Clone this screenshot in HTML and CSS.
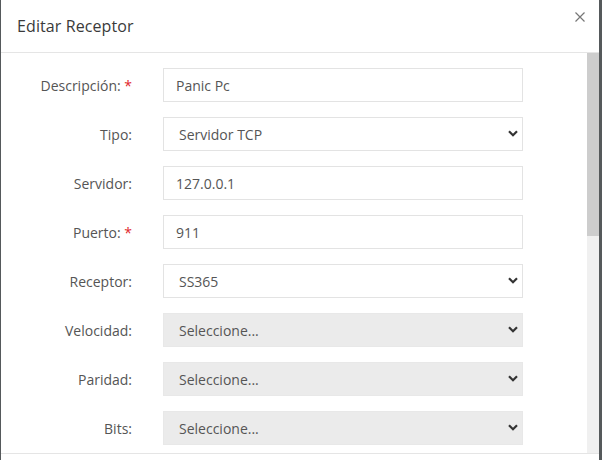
FILE: index.html
```html
<!DOCTYPE html>
<html lang="es">
<head>
<meta charset="utf-8">
<title>Editar Receptor</title>
<link rel="stylesheet" href="styles.css">
</head>
<body>
<div class="modal">
  <div class="modal-header">
    <h4 class="modal-title">Editar Receptor</h4>
    <button class="close" type="button" aria-label="Cerrar">
      <svg width="10" height="10" viewBox="0 0 10 10"><path d="M0.5 0.5 L9.5 9.5 M9.5 0.5 L0.5 9.5" stroke="#777" stroke-width="1.2" fill="none"/></svg>
    </button>
  </div>
  <div class="modal-body">
    <form class="form">
      <label class="label">Descripción: <span class="req">*</span></label>
      <input class="control" type="text" value="Panic Pc">

      <label class="label">Tipo:</label>
      <div class="select-wrap">
        <select class="control select"><option>Servidor TCP</option></select>
        <svg class="chev" width="10" height="7" viewBox="0 0 10 7"><path d="M1 1.2 L5 5.2 L9 1.2" stroke="#333" stroke-width="2.2" fill="none"/></svg>
      </div>

      <label class="label">Servidor:</label>
      <input class="control" type="text" value="127.0.0.1">

      <label class="label">Puerto: <span class="req">*</span></label>
      <input class="control" type="text" value="911">

      <label class="label">Receptor:</label>
      <div class="select-wrap">
        <select class="control select"><option>SS365</option></select>
        <svg class="chev" width="10" height="7" viewBox="0 0 10 7"><path d="M1 1.2 L5 5.2 L9 1.2" stroke="#333" stroke-width="2.2" fill="none"/></svg>
      </div>

      <label class="label">Velocidad:</label>
      <div class="select-wrap">
        <select class="control select disabled" disabled><option>Seleccione...</option></select>
        <svg class="chev" width="10" height="7" viewBox="0 0 10 7"><path d="M1 1.2 L5 5.2 L9 1.2" stroke="#333" stroke-width="2.2" fill="none"/></svg>
      </div>

      <label class="label">Paridad:</label>
      <div class="select-wrap">
        <select class="control select disabled" disabled><option>Seleccione...</option></select>
        <svg class="chev" width="10" height="7" viewBox="0 0 10 7"><path d="M1 1.2 L5 5.2 L9 1.2" stroke="#333" stroke-width="2.2" fill="none"/></svg>
      </div>

      <label class="label">Bits:</label>
      <div class="select-wrap">
        <select class="control select disabled" disabled><option>Seleccione...</option></select>
        <svg class="chev" width="10" height="7" viewBox="0 0 10 7"><path d="M1 1.2 L5 5.2 L9 1.2" stroke="#333" stroke-width="2.2" fill="none"/></svg>
      </div>
    </form>
    <div class="scrollbar"><div class="thumb"></div></div>
  </div>
  <div class="modal-footer"></div>
</div>
</body>
</html>
```
FILE: styles.css
```css
html, body {
  margin: 0;
  padding: 0;
  height: 100%;
  overflow: hidden;
}
body {
  background: #55595b;
  font-family: "Open Sans", "Noto Sans", sans-serif;
  font-size: 14px;
  color: #555;
}
.modal {
  margin-left: 1px;
  width: 598px;
  background: #fff;
  display: flex;
  flex-direction: column;
}
.modal-header {
  position: relative;
  padding: 15px 16px;
  border-bottom: 1px solid #e5e5e5;
}
.modal-title {
  margin: 0;
  font-size: 16px;
  line-height: 22px;
  font-weight: normal;
  color: #3a3a3a;
  letter-spacing: 0.1px;
}
.close {
  position: absolute;
  top: 12px;
  right: 14px;
  padding: 0;
  border: 0;
  background: none;
  width: 10px;
  height: 10px;
  display: block;
}
.close svg { display: block; }
.modal-body {
  height: 400px;
  overflow: hidden;
  display: flex;
}
.form {
  flex: 1;
  display: grid;
  grid-template-columns: 131px 360px;
  grid-auto-rows: 34px;
  column-gap: 31px;
  row-gap: 15px;
  padding: 15px 0 0;
  align-items: center;
  align-content: start;
}
.scrollbar {
  width: 12px;
  background: #f0f0f0;
  flex: none;
}
.thumb {
  height: 183px;
  background: #cdcdcd;
}
.label {
  text-align: right;
  line-height: 19px;
  color: #555;
}
.req { color: #e0262b; }
.control {
  box-sizing: border-box;
  width: 360px;
  height: 34px;
  margin: 0;
  border: 1px solid #e3e3e3;
  border-radius: 0;
  background: #fff;
  font-family: "Open Sans", "Noto Sans", sans-serif;
  font-size: 14px;
  color: #555;
  padding: 0 12px;
  outline: none;
}
.select-wrap {
  position: relative;
  width: 360px;
  height: 34px;
}
.select {
  -webkit-appearance: none;
  appearance: none;
  padding-left: 15px;
  display: block;
}
.select.disabled {
  background: #ebebeb;
  border-color: #e8e8e8;
  color: #555;
  opacity: 1;
}
.chev {
  position: absolute;
  right: 5px;
  top: 13px;
  pointer-events: none;
}
.modal-footer {
  border-top: 1px solid #e5e5e5;
  height: 60px;
}
```
